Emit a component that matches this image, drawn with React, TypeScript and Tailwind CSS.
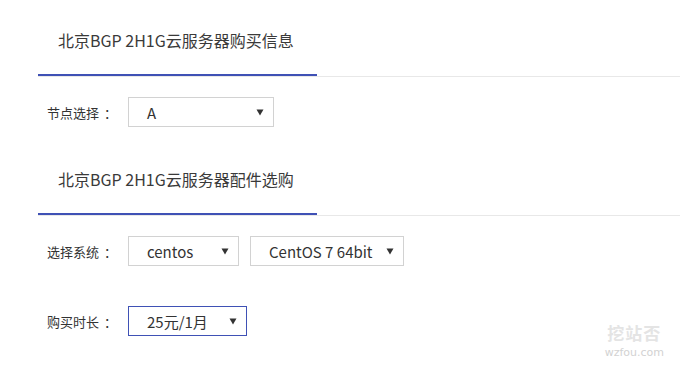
import React from 'react';

const font = { fontFamily: '"Noto Sans CJK SC", "Microsoft YaHei", sans-serif' };

const Caret = () => (
  <svg width="8" height="7" viewBox="0 0 8 7" className="shrink-0">
    <path d="M0.5 0.5 H7.5 L4 6.5 Z" fill="#333" />
  </svg>
);

interface FakeSelectProps {
  value: string;
  width: string;
  active?: boolean;
}

const FakeSelect = ({ value, width, active }: FakeSelectProps) => (
  <div
    className={`${width} h-[30px] flex items-center justify-between pl-[18px] pr-[9px] border bg-white ${
      active ? 'border-[#3f51b5]' : 'border-[#d2d2d2]'
    }`}
  >
    <span className="text-[15px] text-[#333] leading-none">{value}</span>
    <Caret />
  </div>
);

const SectionTitle = ({ title }: { title: string }) => (
  <div className="ml-[38px] border-b border-[#e8e8e8]">
    <div className="w-[279px] h-[76px] border-b-2 border-[#3f51b5] pl-[20px] pt-[5px] flex items-center">
      <span className="text-[16px] text-[#3a3a3a] leading-none">{title}</span>
    </div>
  </div>
);

const Row = ({ label, children }: { label: string; children: React.ReactNode }) => (
  <div className="flex items-center pl-[47px]">
    <span className="w-[81px] shrink-0 text-[13px] text-[#333] whitespace-nowrap leading-none">
      {label}
      <span className="ml-[5px]">：</span>
    </span>
    <div className="flex items-center gap-[11px]">{children}</div>
  </div>
);

export default function App() {
  return (
    <div className="relative w-[680px] h-[366px] bg-white overflow-hidden" style={font}>
      <SectionTitle title="北京BGP 2H1G云服务器购买信息" />
      <div className="mt-[20px]">
        <Row label="节点选择">
          <FakeSelect value="A" width="w-[146px]" />
        </Row>
      </div>

      <div className="mt-[12px]">
        <SectionTitle title="北京BGP 2H1G云服务器配件选购" />
      </div>
      <div className="mt-[20px]">
        <Row label="选择系统">
          <FakeSelect value="centos" width="w-[111px]" />
          <FakeSelect value="CentOS 7 64bit" width="w-[154px]" />
        </Row>
      </div>
      <div className="mt-[40px]">
        <Row label="购买时长">
          <FakeSelect value="25元/1月" width="w-[119px]" active />
        </Row>
      </div>

      <div className="absolute right-[16px] bottom-[8px] flex flex-col items-center select-none">
        <span className="text-[17px] font-bold tracking-[1px] text-[#e4e4e4] leading-none">挖站否</span>
        <span className="mt-[6px] text-[11px] text-[#d2d2d2] leading-none" style={{ fontFamily: '"DejaVu Sans", sans-serif' }}>
          wzfou.com
        </span>
      </div>
    </div>
  );
}
